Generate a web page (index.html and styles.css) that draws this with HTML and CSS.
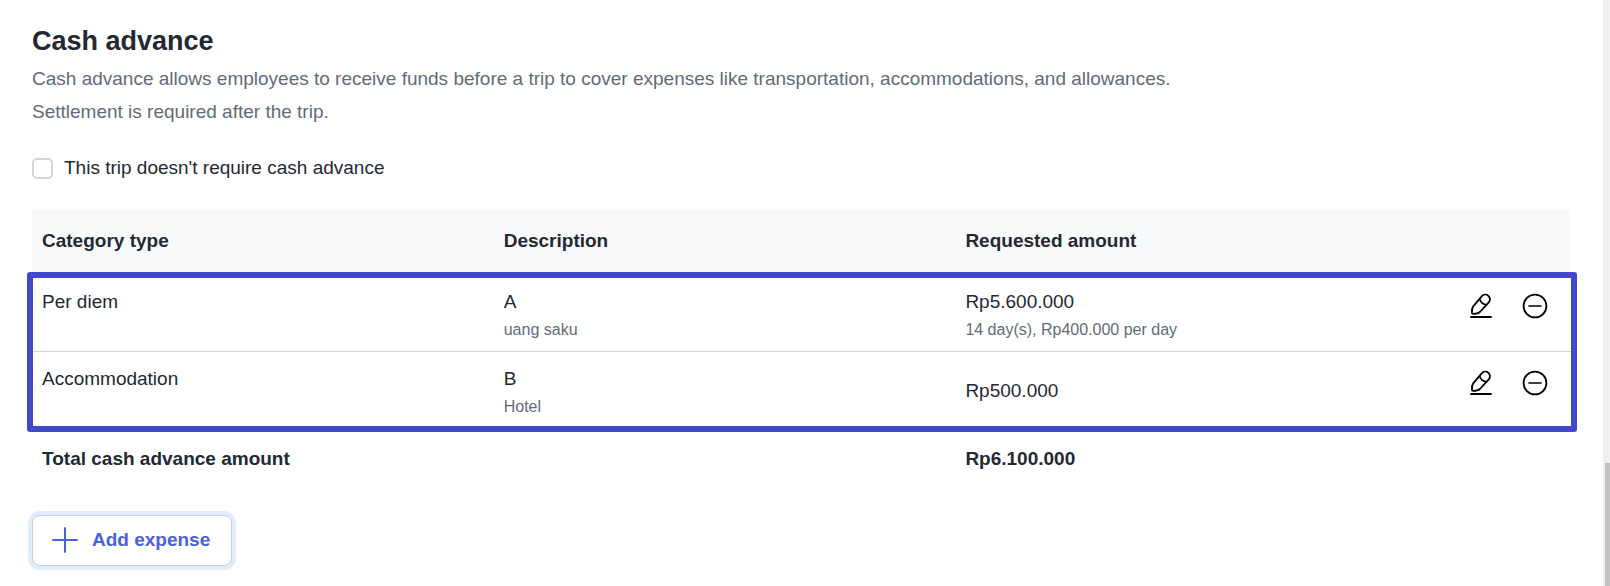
FILE: index.html
```
<!DOCTYPE html>
<html lang="en">
<head>
    <meta charset="UTF-8">
    <meta name="viewport" content="width=device-width, initial-scale=1.0">
    <title>Cash advance</title>
    <link rel="stylesheet" href="styles.css">
</head>
<body>

    <svg class="sprite" aria-hidden="true">
        <symbol id="icon-edit" viewBox="0 0 28 28">
            <path d="M4 25h20M5 20.900c-.3-2.600.1-5 1.200-6.500L14.900 4.200a4.600 4.600 0 0 1 6.900 6.100L12.900 20c-1.500 1.300-4.500 1.800-6.900 1.800-.6 0-1-.3-1-.9zM12.700 6.900c.6 2.800 3.200 5.300 6.500 6" fill="none" stroke="currentColor" stroke-width="1.800" stroke-linecap="round" stroke-linejoin="round"/>
        </symbol>
        <symbol id="icon-remove" viewBox="0 0 28 28">
            <circle cx="14" cy="14" r="11.400" fill="none" stroke="currentColor" stroke-width="1.800"/>
            <path d="M8 14h12" stroke="currentColor" stroke-width="1.600" stroke-linecap="round"/>
        </symbol>
    </svg>

    <div class="page">
        <main class="content">
            <h1 class="title">Cash advance</h1>
            <p class="intro">Cash advance allows employees to receive funds before a trip to cover expenses like transportation, accommodations, and allowances. Settlement is required after the trip.</p>

            <label class="check">
                <input type="checkbox" class="check-box">
                <span>This trip doesn't require cash advance</span>
            </label>

            <table class="expenses">
                <thead>
                    <tr>
                        <th class="col" scope="col">Category type</th>
                        <th class="col" scope="col">Description</th>
                        <th class="col" scope="col">Requested amount</th>
                        <td></td>
                    </tr>
                </thead>
                <tbody>
                    <tr>
                        <td>Per diem</td>
                        <td>A<small>uang saku</small></td>
                        <td>Rp5.600.000<small>14 day(s), Rp400.000 per day</small></td>
                        <td>
                            <div class="actions">
                                <button class="icon-btn" aria-label="Edit per diem"><svg><use href="#icon-edit"/></svg></button>
                                <button class="icon-btn" aria-label="Remove per diem"><svg><use href="#icon-remove"/></svg></button>
                            </div>
                        </td>
                    </tr>
                    <tr>
                        <td>Accommodation</td>
                        <td>B<small>Hotel</small></td>
                        <td class="middle">Rp500.000</td>
                        <td>
                            <div class="actions">
                                <button class="icon-btn" aria-label="Edit accommodation"><svg><use href="#icon-edit"/></svg></button>
                                <button class="icon-btn" aria-label="Remove accommodation"><svg><use href="#icon-remove"/></svg></button>
                            </div>
                        </td>
                    </tr>
                </tbody>
                <tfoot>
                    <tr>
                        <th colspan="2" scope="row">Total cash advance amount</th>
                        <th>Rp6.100.000</th>
                        <td></td>
                    </tr>
                </tfoot>
            </table>

            <button class="add-btn">
                <svg class="plus" viewBox="0 0 28 28" aria-hidden="true"><path d="M14 2v24M2 14h24" stroke="currentColor" stroke-width="2" stroke-linecap="round"/></svg>
                Add expense
            </button>
        </main>

        <div class="scrollbar"><div class="thumb"></div></div>
    </div>

</body>
</html>
```
FILE: styles.css
```
* {
    box-sizing: border-box;
}

body {
    margin: 0;
    background: #fff;
    color: #232933;
    font-family: "Liberation Sans", Arial, sans-serif;
    font-size: 19px;
    line-height: 28px;
}

.sprite {
    display: none;
}

.page {
    display: flex;
    height: 100vh;
    overflow: hidden;
}

.content {
    flex: 1;
    padding: 24px 32px 0;
}

.title {
    margin: 0;
    font-size: 27px;
    line-height: 34px;
}

.intro {
    max-width: 1200px;
    margin: 4px 0 26px;
    color: #626b79;
    line-height: 33px;
}

.check {
    display: flex;
    align-items: center;
    gap: 11px;
    margin-bottom: 27px;
}

.check-box {
    appearance: none;
    width: 21px;
    height: 21px;
    margin: 0;
    background: #fff;
    border: 2px solid #d0d6dd;
    border-radius: 5px;
}

.check-box:checked {
    background: #4b61dd;
}

.expenses {
    width: 100%;
    table-layout: fixed;
    border-collapse: separate;
    border-spacing: 0;
}

.expenses th,
.expenses td {
    padding: 13px 10px 8px;
    text-align: left;
    vertical-align: top;
}

.expenses .col {
    width: 30%;
}

.expenses thead th,
.expenses thead td {
    padding: 18px 10px 20px;
    background: #f8f9fb;
}

/* frame around the requested expenses */
.expenses tbody {
    position: relative;
}

.expenses tbody::after {
    content: "";
    position: absolute;
    inset: -3px -6px -3px -5px;
    border: 6px solid #4049cc;
    border-radius: 3px;
    pointer-events: none;
}

.expenses tbody tr:first-child td {
    padding-bottom: 7px;
    border-bottom: 1px solid #cdd4dc;
}

.expenses tbody .middle {
    padding: 8px 10px;
    vertical-align: middle;
}

.expenses small {
    display: block;
    color: #626b79;
    font-size: 16px;
    line-height: 28px;
}

.expenses tfoot th {
    padding: 16px 10px;
}

.actions {
    display: flex;
    justify-content: flex-end;
    gap: 26px;
    padding: 4px 12px 0 0;
}

.icon-btn {
    display: flex;
    padding: 0;
    background: none;
    border: 0;
    color: #000;
    cursor: pointer;
}

.icon-btn svg {
    width: 28px;
    height: 28px;
}

.add-btn {
    display: flex;
    align-items: center;
    gap: 13px;
    margin-top: 26px;
    padding: 10px 21px 11px 18px;
    background: #fff;
    border: 1px solid #c9d0dc;
    border-radius: 8px;
    box-shadow: 0 0 0 4px #e0edff;
    color: #4b61dd;
    font: inherit;
    font-weight: bold;
    cursor: pointer;
}

.plus {
    width: 28px;
    height: 28px;
}

.scrollbar {
    display: flex;
    flex-direction: column;
    justify-content: flex-end;
    width: 7px;
    padding-left: 2px;
    background: #f0f0f0;
}

.thumb {
    height: 21%;
    background: #c1c1c1;
}
```
